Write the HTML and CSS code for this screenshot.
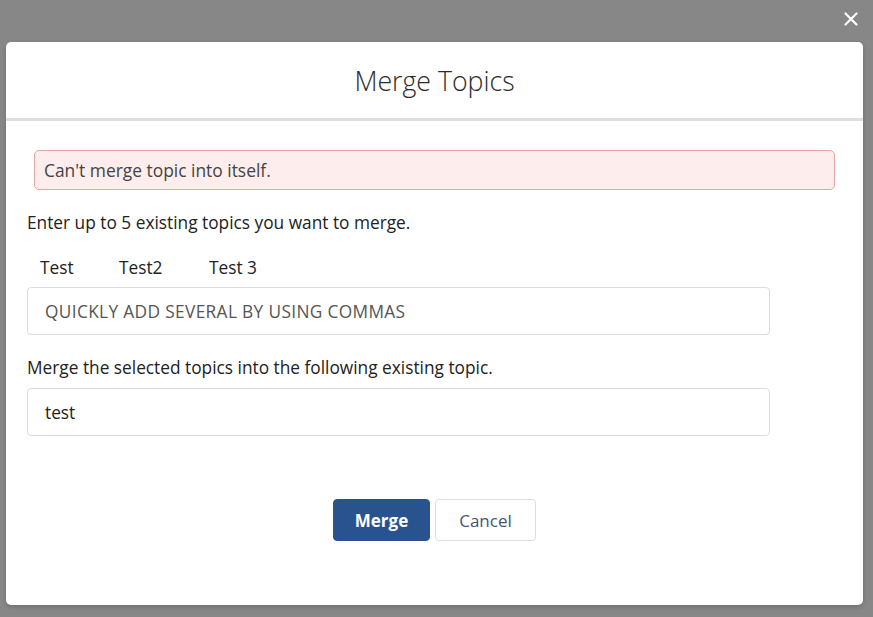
FILE: index.html
```html
<!DOCTYPE html>
<html>
<head>
<meta charset="utf-8">
<link rel="stylesheet" href="styles.css">
</head>
<body>
<div class="backdrop">
  <button class="close" aria-label="Close">
    <svg width="14" height="14" viewBox="0 0 14 14"><path d="M1.5 1.5 L12.5 12.5 M12.5 1.5 L1.5 12.5" stroke="#fff" stroke-width="2.2" stroke-linecap="round"/></svg>
  </button>
  <div class="modal">
    <div class="header">
      <h2 class="title">Merge Topics</h2>
    </div>
    <div class="body">
      <div class="error">Can't merge topic into itself.</div>
      <div class="label">Enter up to 5 existing topics you want to merge.</div>
      <div class="tags">
        <span class="tag">Test</span>
        <span class="tag">Test2</span>
        <span class="tag">Test 3</span>
      </div>
      <div class="input placeholder">QUICKLY ADD SEVERAL BY USING COMMAS</div>
      <div class="label label2">Merge the selected topics into the following existing topic.</div>
      <div class="input">test</div>
      <div class="actions">
        <button class="btn primary">Merge</button>
        <button class="btn neutral">Cancel</button>
      </div>
    </div>
  </div>
</div>
</body>
</html>
```

FILE: styles.css
```css
* { box-sizing: border-box; }
html, body { margin: 0; padding: 0; }
body {
  width: 873px;
  height: 617px;
  background: #878787;
  font-family: "Open Sans", "Noto Sans", sans-serif;
  color: #333;
  overflow: hidden;
}
.backdrop {
  position: relative;
  width: 873px;
  height: 617px;
  padding: 42px 10px 0 6px;
}
.close {
  position: absolute;
  top: 11px;
  right: 14px;
  width: 16px;
  height: 16px;
  padding: 0;
  border: 0;
  background: none;
  display: flex;
  align-items: center;
  justify-content: center;
}
.modal {
  width: 857px;
  height: 563px;
  background: #fff;
  border-radius: 5px;
  box-shadow: 0 2px 4px rgba(0,0,0,0.18);
  display: flex;
  flex-direction: column;
}
.header {
  height: 79px;
  border-bottom: 3px solid #dddddd;
  display: flex;
  align-items: center;
  justify-content: center;
}
.title {
  margin: 0;
  font-family: "Open Sans", sans-serif;
  font-weight: 300;
  font-size: 26.7px;
  color: #2b2b2b;
}
.body {
  padding: 29px 28px 0 21px;
}
.error {
  margin-left: 7px;
  height: 40px;
  background: #fdeded;
  border: 1px solid #e3a5a5;
  border-radius: 5px;
  padding: 0 9px;
  display: flex;
  align-items: center;
  font-size: 17.4px;
  color: #444;
}
.label {
  margin-top: 22px;
  font-size: 17.3px;
  color: #222;
  line-height: 22px;
}
.tags {
  display: flex;
  margin-top: 23px;
  padding-left: 13px;
  font-size: 17.3px;
  color: #222;
  line-height: 22px;
}
.tag:nth-child(1) { width: 79px; }
.tag:nth-child(2) { width: 90px; }
.input {
  margin-top: 8px;
  width: 743px;
  height: 48px;
  border: 1px solid #dcdcdc;
  border-radius: 4px;
  padding: 0 17px;
  display: flex;
  align-items: center;
  font-size: 17.3px;
  color: #222;
}
.placeholder { color: #555; letter-spacing: 0.35px; }
.label2 { margin-top: 22px; }
.label2 + .input { margin-top: 9px; }
.actions {
  display: flex;
  justify-content: center;
  gap: 5px;
  margin-top: 63px;
  margin-left: 7px;
}
.btn {
  height: 42px;
  border-radius: 4px;
  font-family: "Open Sans", sans-serif;
  font-size: 17px;
  cursor: pointer;
}
.primary {
  width: 97px;
  background: #29538f;
  border: 1px solid #29538f;
  color: #fff;
  font-weight: 700;
}
.neutral {
  width: 101px;
  background: #fff;
  border: 1px solid #d8dde6;
  color: #3f5670;
}
```
